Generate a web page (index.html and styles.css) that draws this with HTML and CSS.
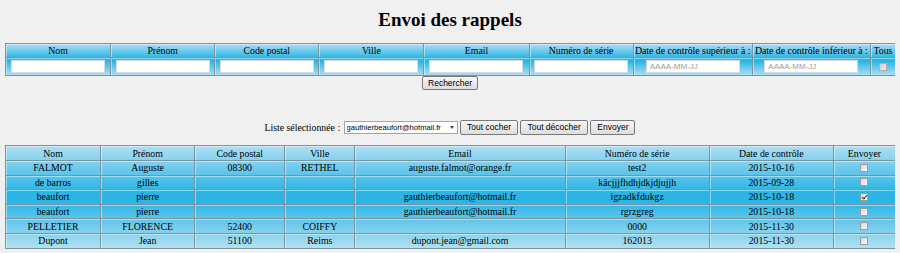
FILE: index.html
```html
<!DOCTYPE html>
<html lang="fr">
<head>
    <meta charset="UTF-8">
    <title>Envoi des rappels</title>
    <link rel="stylesheet" href="styles.css">
</head>
<body>
    <h1 class="title">Envoi des rappels</h1>

    <table class="grid filters">
        <thead>
            <tr>
                <th class="f-nom">Nom</th>
                <th class="f-prenom">Prénom</th>
                <th class="f-cp">Code postal</th>
                <th class="f-ville">Ville</th>
                <th class="f-email">Email</th>
                <th class="f-serie">Numéro de série</th>
                <th class="f-sup">Date de contrôle supérieur à :</th>
                <th class="f-inf">Date de contrôle inférieur à :</th>
                <th class="f-tous">Tous</th>
            </tr>
        </thead>
        <tbody>
            <tr>
                <td><input type="text" class="field"></td>
                <td><input type="text" class="field"></td>
                <td><input type="text" class="field"></td>
                <td><input type="text" class="field"></td>
                <td><input type="text" class="field"></td>
                <td><input type="text" class="field"></td>
                <td><input type="text" class="field" placeholder="AAAA-MM-JJ"></td>
                <td><input type="text" class="field" placeholder="AAAA-MM-JJ"></td>
                <td><input type="checkbox" class="check" disabled></td>
            </tr>
        </tbody>
    </table>

    <div class="search">
        <button class="btn">Rechercher</button>
    </div>

    <div class="list-bar">
        <label for="liste">Liste sélectionnée :</label>
        <span class="select-wrap">
            <select id="liste">
                <option>gauthierbeaufort@hotmail.fr</option>
            </select>
        </span>
        <button class="btn">Tout cocher</button>
        <button class="btn">Tout décocher</button>
        <button class="btn">Envoyer</button>
    </div>

    <table class="grid results">
        <thead>
            <tr>
                <th class="r-nom">Nom</th>
                <th class="r-prenom">Prénom</th>
                <th class="r-cp">Code postal</th>
                <th class="r-ville">Ville</th>
                <th class="r-email">Email</th>
                <th class="r-serie">Numéro de série</th>
                <th class="r-date">Date de contrôle</th>
                <th class="r-envoyer">Envoyer</th>
            </tr>
        </thead>
        <tbody>
            <tr>
                <td>FALMOT</td><td>Auguste</td><td>08300</td><td>RETHEL</td>
                <td>auguste.falmot@orange.fr</td><td>test2</td><td>2015-10-16</td>
                <td><input type="checkbox" class="check"></td>
            </tr>
            <tr>
                <td>de barros</td><td>gilles</td><td></td><td></td>
                <td></td><td>kâcjjjfhdhjdkjdjujjh</td><td>2015-09-28</td>
                <td><input type="checkbox" class="check"></td>
            </tr>
            <tr class="selected">
                <td>beaufort</td><td>pierre</td><td></td><td></td>
                <td>gauthierbeaufort@hotmail.fr</td><td>igzadkfdukgz</td><td>2015-10-18</td>
                <td><input type="checkbox" class="check" checked></td>
            </tr>
            <tr>
                <td>beaufort</td><td>pierre</td><td></td><td></td>
                <td>gauthierbeaufort@hotmail.fr</td><td>rgrzgreg</td><td>2015-10-18</td>
                <td><input type="checkbox" class="check"></td>
            </tr>
            <tr>
                <td>PELLETIER</td><td>FLORENCE</td><td>52400</td><td>COIFFY</td>
                <td></td><td>0000</td><td>2015-11-30</td>
                <td><input type="checkbox" class="check"></td>
            </tr>
            <tr>
                <td>Dupont</td><td>Jean</td><td>51100</td><td>Reims</td>
                <td>dupont.jean@gmail.com</td><td>162013</td><td>2015-11-30</td>
                <td><input type="checkbox" class="check"></td>
            </tr>
        </tbody>
    </table>
</body>
</html>
```

FILE: styles.css
```css
body {
    margin: 0 5px;
    background-color: #f0f0f0;
    font-family: "Liberation Serif", "Times New Roman", serif;
    font-size: 9.8px;
    color: #000;
}
.title {
    margin: 9px 0 13px;
    font-size: 19px;
    line-height: 21px;
    text-align: center;
}

/* tables */
.grid {
    width: 891px;
    table-layout: fixed;
    border-collapse: collapse;
    border: 1px solid #7f939c;
    background: linear-gradient(to bottom, #b0dff2 0%, #2bb5e5 45%, #2bb5e5 55%, #b0dff2 100%);
}
.grid th,
.grid td {
    box-sizing: border-box;
    padding: 0;
    border: 1px solid #7a95a1;
    box-shadow: inset 1px 1px 0 rgba(255, 255, 255, 0.45);
    font-weight: normal;
    text-align: center;
    white-space: nowrap;
    overflow: hidden;
}
.filters th {
    height: 14px;
}
.filters td {
    height: 18px;
}
.f-nom { width: 105px; }
.f-prenom { width: 104px; }
.f-cp { width: 104px; }
.f-ville { width: 105px; }
.f-email { width: 105px; }
.f-serie { width: 104px; }
.f-sup { width: 119px; }
.f-inf { width: 118px; }
.f-tous { width: 25px; }

.results th {
    height: 15px;
}
.results td {
    height: 14.6px;
}
.r-nom { width: 95px; }
.r-prenom { width: 94px; }
.r-cp { width: 90px; }
.r-ville { width: 70px; }
.r-email { width: 210px; }
.r-serie { width: 144px; }
.r-date { width: 124px; }
.r-envoyer { width: 62px; }

/* form controls */
.field {
    display: block;
    box-sizing: border-box;
    width: 94px;
    height: 13px;
    margin: 0 auto;
    padding: 0 3px;
    border: 1px solid #d5dde1;
    background-color: #fff;
    font-family: "Liberation Sans", Arial, sans-serif;
    font-size: 8px;
}
.field::placeholder {
    color: #a0a0a0;
}
.check {
    appearance: none;
    display: block;
    width: 8px;
    height: 8px;
    margin: 0 auto;
    border: 1px solid #9a9c9d;
    background: linear-gradient(135deg, #d6d6d6, #fbfbfb);
    position: relative;
}
.check:disabled {
    border-color: #b0b0b0;
    background: linear-gradient(135deg, #d0d0d0, #ececec);
}
.check:checked::after {
    content: "";
    position: absolute;
    left: 2px;
    top: 0;
    width: 2px;
    height: 4px;
    border: solid #333;
    border-width: 0 1px 1px 0;
    transform: rotate(40deg);
}

.btn {
    display: inline-block;
    height: 15px;
    padding: 0 6px;
    border: 1px solid #7a7a7a;
    border-radius: 2px;
    background: linear-gradient(to bottom, #f6f6f6, #dddddd);
    font-family: "Liberation Sans", Arial, sans-serif;
    font-size: 8.5px;
    line-height: 13px;
    color: #000;
    vertical-align: top;
}

.search {
    height: 14px;
    text-align: center;
}
.search .btn {
    height: 14px;
    line-height: 12px;
    padding: 0 5px;
}

.list-bar {
    margin-top: 30px;
    height: 15px;
    line-height: 15px;
    text-align: center;
}
.list-bar label {
    vertical-align: top;
    margin-right: 1px;
}
.select-wrap {
    position: relative;
    display: inline-block;
    vertical-align: top;
    margin-top: 1px;
}
.select-wrap select {
    appearance: none;
    display: block;
    width: 114px;
    height: 13px;
    padding: 0 12px 0 2px;
    border: 1px solid #a5a5a5;
    border-radius: 0;
    background-color: #fff;
    font-family: "Liberation Sans", Arial, sans-serif;
    font-size: 7.6px;
    line-height: 11px;
}
.select-wrap::after {
    content: "";
    position: absolute;
    right: 4px;
    top: 5px;
    border-left: 2.5px solid transparent;
    border-right: 2.5px solid transparent;
    border-top: 3px solid #444;
}

.results {
    margin-top: 10px;
}
```
